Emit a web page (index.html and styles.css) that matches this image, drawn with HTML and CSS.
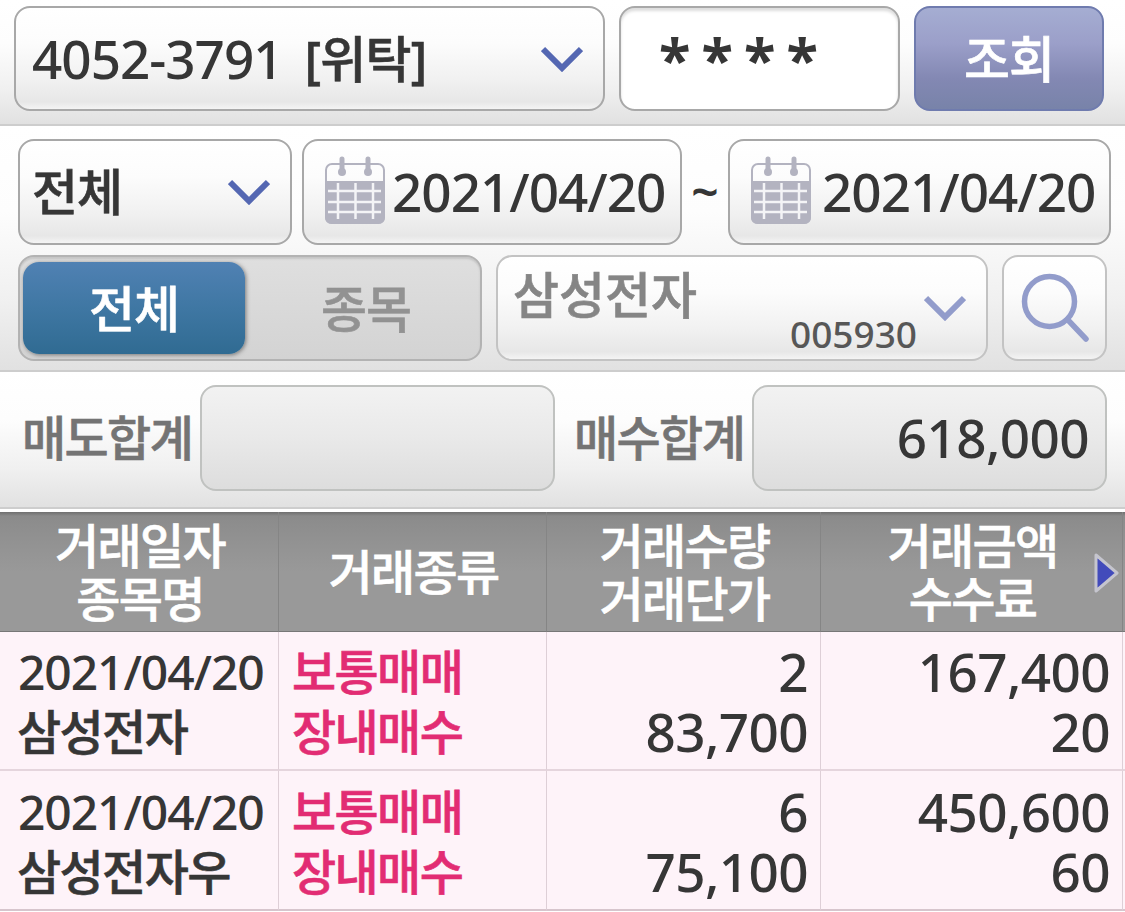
FILE: index.html
```html
<!DOCTYPE html>
<html lang="ko">
<head>
  <meta charset="UTF-8">
  <title>거래내역 조회</title>
  <link rel="stylesheet" href="styles.css">
</head>
<body>

  <!-- 계좌 -->
  <section class="bar account-bar">
    <div class="box account">
      <span class="account-no">4052-3791</span>
      <span class="account-type">[위탁]</span>
      <svg class="chevron" width="42" height="26" viewBox="0 0 42 26"><path d="M2 3 L21 22 L40 3"/></svg>
    </div>
    <div class="box password"><i>*</i><i>*</i><i>*</i><i>*</i></div>
    <button class="search-btn">조회</button>
  </section>

  <!-- 조회 조건 -->
  <section class="bar filter-bar">
    <div class="row">
      <div class="box kind">
        <span>전체</span>
        <svg class="chevron" width="42" height="26" viewBox="0 0 42 26"><path d="M2 3 L21 22 L40 3"/></svg>
      </div>
      <div class="box date">
        <svg class="calendar" width="62" height="70" viewBox="0 0 62 70">
          <rect class="frame" x="2" y="8" width="58" height="59" rx="6"/>
          <path class="body" d="M1 25H61V61Q61 68 54 68H8Q1 68 1 61Z"/>
          <path class="lines" d="M4 35H57M4 46H57M4 56H57M14 27V63M31.500 27V63M49 27V63"/>
          <path class="ring" d="M18 3V16M44 3V16"/>
          <circle cx="18" cy="16" r="4"/><circle cx="44" cy="16" r="4"/>
        </svg>
        <span>2021/04/20</span>
      </div>
      <span class="tilde">~</span>
      <div class="box date date-to">
        <svg class="calendar" width="62" height="70" viewBox="0 0 62 70">
          <rect class="frame" x="2" y="8" width="58" height="59" rx="6"/>
          <path class="body" d="M1 25H61V61Q61 68 54 68H8Q1 68 1 61Z"/>
          <path class="lines" d="M4 35H57M4 46H57M4 56H57M14 27V63M31.500 27V63M49 27V63"/>
          <path class="ring" d="M18 3V16M44 3V16"/>
          <circle cx="18" cy="16" r="4"/><circle cx="44" cy="16" r="4"/>
        </svg>
        <span>2021/04/20</span>
      </div>
    </div>
    <div class="row">
      <div class="toggle">
        <span class="on">전체</span>
        <span class="off">종목</span>
      </div>
      <div class="box stock">
        <span class="stock-name">삼성전자</span>
        <span class="stock-code">005930</span>
        <svg class="chevron" width="42" height="26" viewBox="0 0 42 26"><path d="M2 3 L21 22 L40 3"/></svg>
      </div>
      <div class="box find">
        <svg width="68" height="70" viewBox="0 0 68 70"><circle cx="28.500" cy="28.500" r="25"/><path d="M46.500 46.500 L65 66"/></svg>
      </div>
    </div>
  </section>

  <!-- 합계 -->
  <section class="bar total-bar">
    <label>매도합계</label>
    <div class="total"></div>
    <label class="buy">매수합계</label>
    <div class="total">618,000</div>
  </section>

  <table>
    <thead>
      <tr>
        <th class="c1">거래일자<br>종목명</th>
        <th class="c2">거래종류</th>
        <th class="c3">거래수량<br>거래단가</th>
        <th class="c4">거래금액<br>수수료
          <svg class="next" width="26" height="42" viewBox="0 0 26 42"><path d="M3 3 L24 21 L3 39Z"/></svg>
        </th>
        <th class="c5"></th>
      </tr>
    </thead>
    <tbody>
      <tr>
        <td><div class="day">2021/04/20</div><div class="name">삼성전자</div></td>
        <td class="type"><div>보통매매</div><div>장내매수</div></td>
        <td class="num"><div>2</div><div>83,700</div></td>
        <td class="num"><div>167,400</div><div>20</div></td>
        <td></td>
      </tr>
      <tr>
        <td><div class="day">2021/04/20</div><div class="name">삼성전자우</div></td>
        <td class="type"><div>보통매매</div><div>장내매수</div></td>
        <td class="num"><div>6</div><div>75,100</div></td>
        <td class="num"><div>450,600</div><div>60</div></td>
        <td></td>
      </tr>
    </tbody>
  </table>

</body>
</html>
```
FILE: styles.css
```css
* { box-sizing: border-box; }
body {
  margin: 0;
  width: 1125px;
  height: 912px;
  overflow: hidden;
  background: #fff;
  color: #363636;
  font-family: "Noto Sans", "Noto Sans CJK KR", sans-serif;
  font-weight: 500;
  font-size: 48px;
  line-height: 60px;
  white-space: nowrap;
}

.bar {
  background: linear-gradient(#fff 0%, #fdfdfd 35%, #f0f0f0 72%, #e1e1e1 100%);
  border-bottom: 2px solid #cdcdcd;
}
.box {
  display: flex;
  align-items: center;
  height: 106px;
  border: 2px solid #a8a8a8;
  border-radius: 16px;
  background: linear-gradient(#fff 0%, #fcfcfc 35%, #f1f1f1 70%, #e7e7e7 93%, #f4f4f4 100%);
}
.chevron { fill: none; stroke: #5467b2; stroke-width: 6; stroke-linejoin: miter; margin-left: auto; }
.account-type, .search-btn, .kind, .toggle, .stock-name, label, th, .name, .type {
  -webkit-text-stroke: 0.6px currentColor;
}

.account-bar {
  display: flex;
  height: 126px;
  padding: 6px 0 0 14px;
}
.account-bar .box, .search-btn { height: 105px; }
.account { width: 591px; padding: 0 20px 0 16px; }
.account-no { font-size: 53px; letter-spacing: -1px; }
.account-type { margin-left: 22px; font-size: 50px; letter-spacing: -0.8px; }
.password {
  width: 281px;
  margin-left: 14px;
  padding-left: 38px;
  background: #fff;
  box-shadow: inset 0 3px 3px #ddd;
}
.password i {
  width: 42.500px;
  height: 60px;
  font-style: normal;
  font-weight: 700;
  font-size: 58px;
  line-height: 60px;
}
.search-btn {
  width: 190px;
  margin-left: 14px;
  padding: 0;
  border: 2px solid #6f7bae;
  border-radius: 16px;
  background: linear-gradient(#a5add2 0%, #9b9fc9 35%, #8388b3 70%, #7883a9 100%);
  color: #fff;
  font: inherit;
  font-size: 50px;
  letter-spacing: -1px;
}

.filter-bar {
  height: 246px;
  padding: 13px 0 0 18px;
}
.row { display: flex; height: 116px; }
.kind { width: 274px; padding: 0 20px 0 12px; font-size: 50px; letter-spacing: -1px; }
.date { width: 380px; margin-left: 10px; padding-left: 20px; font-size: 53px; letter-spacing: -1px; }
.calendar { margin: -3px 6px 0 0; fill: #b3b3c0; }
.calendar .frame { fill: none; stroke: #b3b3c0; stroke-width: 2; }
.calendar .lines { fill: none; stroke: #f4f4f6; stroke-width: 2.500; }
.calendar .ring { stroke: #b3b3c0; stroke-width: 5; stroke-linecap: round; }
.tilde { width: 46px; font-weight: 600; line-height: 106px; text-align: center; }
.date-to { width: 383px; margin-left: 0; }
.date-to .calendar { margin-right: 10px; }

.toggle {
  display: flex;
  width: 464px;
  height: 106px;
  padding: 5px 3px;
  border: 2px solid #b3b3b3;
  border-radius: 16px;
  background: linear-gradient(#dfdfdf, #d3d3d3);
  box-shadow: inset 0 2px 2px #c5c5c5;
  text-align: center;
  font-size: 50px;
  letter-spacing: -1px;
  line-height: 95px;
}
.toggle .on {
  width: 222px;
  height: 92px;
  border-radius: 16px;
  background: linear-gradient(#5081b3, #3f77a3 50%, #306b92);
  box-shadow: 1px 1px 4px #777;
  color: #fff;
}
.toggle .off { flex: 1; padding-left: 10px; color: #929292; }
.stock {
  position: relative;
  width: 492px;
  margin-left: 14px;
  padding: 0 20px 0 15px;
  border-color: #c3c3c3;
}
.stock .chevron, .find svg { stroke: #929ccb; }
.stock-name { color: #858585; margin-top: -26px; font-size: 50px; }
.stock-code { position: absolute; right: 69px; bottom: -5px; color: #575757; font-size: 37px; }
.find { width: 105px; margin-left: 14px; padding-left: 17px; border-color: #c3c3c3; }
.find svg { fill: none; stroke-width: 5.500; stroke-linecap: round; }

.total-bar {
  display: flex;
  align-items: center;
  height: 137px;
  padding: 0 0 4px 22px;
}
.total-bar label { width: 178px; padding-top: 1px; color: #747474; letter-spacing: -1.6px; }
.total-bar label.buy { margin-left: 19px; }
.total {
  width: 355px;
  height: 106px;
  padding-right: 16px;
  border: 2px solid #c0c2c0;
  border-radius: 16px;
  background: linear-gradient(#f2f2f2, #e9e9e9 50%, #ddd);
  text-align: right;
  font-size: 53px;
  line-height: 102px;
  letter-spacing: -0.6px;
}

table {
  width: 1125px;
  margin-top: 3px;
  border-collapse: separate;
  border-spacing: 0;
  table-layout: fixed;
}
th {
  position: relative;
  height: 120px;
  padding: 0;
  border-right: 1px solid #858585;
  border-bottom: 1px solid #777;
  background: linear-gradient(#6f6f6f 0, #8b8b8b 4px, #929292 30px, #999 60px);
  color: #fff;
  font-weight: 500;
  line-height: 53px;
  letter-spacing: -1.6px;
}
.c1 { width: 279px; }
.c2 { width: 268px; }
.c3 { width: 274px; }
.c4 { width: 302px; }
.c1, .c2, .c3, .c4 { padding-left: 2px; }
.next { position: absolute; right: 3px; top: 40px; fill: #424bbb; stroke: #c5c5ce; stroke-width: 3; stroke-linejoin: round; }
td {
  height: 139px;
  padding: 2px 11px 0 17px;
  border-right: 1px solid #decfd7;
  border-bottom: 2px solid #e5d5dd;
  background: #fef3f9;
  letter-spacing: -1.6px;
}
tbody tr:last-child td { height: 140px; padding-top: 3px; border-bottom-color: #d7c5cd; }
.day { font-size: 48px; letter-spacing: -1.1px; padding-left: 1px; }
.type { padding-left: 13px; color: #e22c73; }
.num { padding-right: 12px; text-align: right; font-size: 53px; letter-spacing: -0.6px; }
th:last-child, tbody tr td:last-child { padding: 0; border-right: 0; }
```
